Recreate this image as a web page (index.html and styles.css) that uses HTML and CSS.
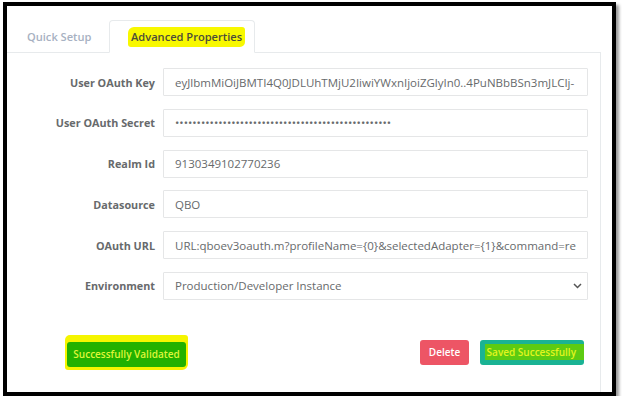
FILE: index.html
```html
<!DOCTYPE html>
<html>
<head>
<meta charset="utf-8">
<link rel="stylesheet" href="styles.css">
</head>
<body>
<div class="frame">
  <div class="tabs">
    <div class="tab">Quick Setup</div>
    <div class="tab active"><span class="hl">Advanced Properties</span></div>
  </div>
  <div class="panel">
    <div class="form">
      <label class="lbl">User OAuth Key</label>
      <input class="field" type="text" value="eyJlbmMiOiJBMTI4Q0JDLUhTMjU2IiwiYWxnIjoiZGlyIn0..4PuNBbBSn3mJLCIj-">
      <label class="lbl">User OAuth Secret</label>
      <input class="field" type="password" value="abcdefghijabcdefghijabcdefghijabcdefghijabcdefghij">
      <label class="lbl">Realm Id</label>
      <input class="field" type="text" value="9130349102770236">
      <label class="lbl">Datasource</label>
      <input class="field" type="text" value="QBO">
      <label class="lbl">OAuth URL</label>
      <input class="field" type="text" value="URL:qboev3oauth.m?profileName={0}&amp;selectedAdapter={1}&amp;command=request">
      <label class="lbl">Environment</label>
      <div class="select-wrap">
        <select class="field select">
          <option>Production/Developer Instance</option>
        </select>
        <svg class="chev" width="9" height="6" viewBox="0 0 9 6"><path d="M1 1 L4.5 4.5 L8 1" fill="none" stroke="#555" stroke-width="1.5"/></svg>
      </div>
    </div>
    <div class="actions">
      <span class="marker"><button class="btn btn-green">Successfully Validated</button></span>
      <div class="right">
        <button class="btn btn-danger">Delete</button>
        <button class="btn btn-primary"><span class="hl2">Saved Successfully</span></button>
      </div>
    </div>
  </div>
</div>
</body>
</html>
```

FILE: styles.css
```css
* { box-sizing: border-box; }
html, body { margin: 0; padding: 0; background: #fff; }
body { font-family: "Open Sans", "Liberation Sans", sans-serif; color: #676a6c; }

.frame {
  margin: 2px 0 0 3px;
  width: 613px;
  height: 394px;
  border: 4px solid #000;
  box-shadow: 3px 3px 3px rgba(0, 0, 0, 0.4);
  overflow: hidden;
  background: #fff;
}

.tabs {
  display: flex;
  margin-top: 14px;
  width: 594px;
  height: 33px;
  border-bottom: 1px solid #e7eaec;
}
.tab {
  height: 33px;
  padding: 0 0 0 20px;
  display: flex;
  align-items: center;
  font-size: 11.1px;
  font-weight: 600;
  color: #a7b1c2;
  white-space: nowrap;
}
.tab:first-child { width: 102px; }
.tab.active {
  width: 146px;
  border: 1px solid #e7eaec;
  border-bottom-color: #fff;
  border-radius: 4px 4px 0 0;
  margin-bottom: -1px;
  background: #fff;
  color: #4b4b3a;
  padding-left: 18px;
}
.hl {
  background: #f8f800;
  padding: 2px 3px 3px;
  border-radius: 6px 3px 5px 3px;
}

.panel {
  width: 594px;
  height: 340px;
  border-right: 1px solid #e7eaec;
  padding-top: 15px;
}

.form {
  display: grid;
  grid-template-columns: 148px 425px;
  column-gap: 8px;
  row-gap: 12.8px;
  align-items: center;
}
.lbl {
  text-align: right;
  font-size: 10.8px;
  font-weight: 700;
  color: #676a6c;
  white-space: nowrap;
}
.field {
  height: 28px;
  width: 425px;
  border: 1px solid #e5e6e7;
  border-radius: 1px;
  padding: 0 11px;
  font-family: "Open Sans", "Liberation Sans", sans-serif;
  font-size: 11.5px;
  color: #676a6c;
  background: #fff;
  outline: none;
}
.select-wrap { position: relative; width: 425px; height: 28px; }
.select {
  appearance: none;
  -webkit-appearance: none;
  display: block;
}
.chev { position: absolute; right: 6px; top: 11px; }

.actions {
  display: flex;
  align-items: center;
  margin-top: 35px;
  width: 577px;
}
.marker {
  margin-left: 58px;
  background: #f5f500;
  padding: 7px 2px 3px 2px;
  border-radius: 5px 3px 6px 3px;
  display: inline-flex;
}
.right { margin-left: auto; display: flex; gap: 11px; }
.btn {
  height: 25px;
  border: none;
  border-radius: 3px;
  font-family: "Open Sans", "Liberation Sans", sans-serif;
  font-size: 10px;
  font-weight: 600;
  padding: 0;
  display: inline-flex;
  align-items: center;
  justify-content: center;
}
.btn-green { background: #22b100; color: #dff53a; width: 119px; }
.btn-danger { background: #ed5565; color: #fff; width: 49px; }
.btn-primary { background: #1ab394; width: 104px; justify-content: flex-end; }
.hl2 { background: #5dcb12; color: #e3f51e; padding: 1px 8px 1px 2px; }
```
